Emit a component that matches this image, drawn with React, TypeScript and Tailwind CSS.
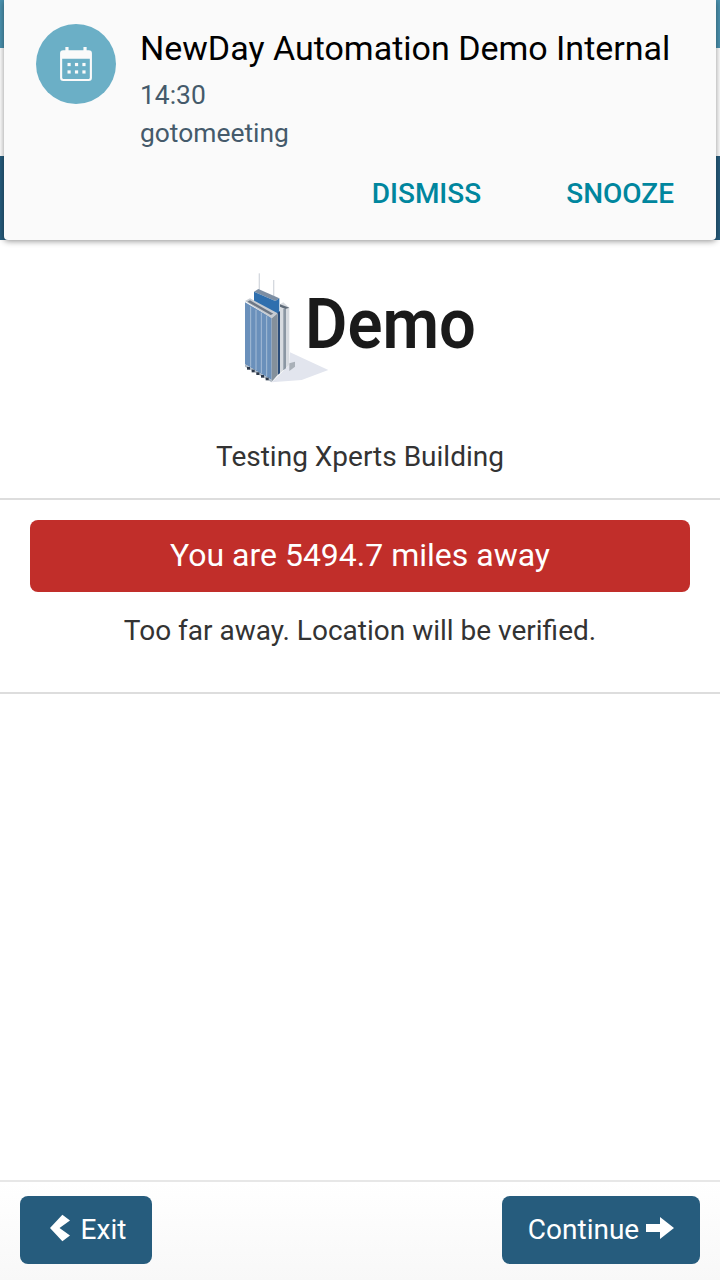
import React from "react";

function CalendarIcon() {
  return (
    <svg width="32" height="34" viewBox="1 1 30 32" fill="none">
      <path
        fillRule="evenodd"
        clipRule="evenodd"
        fill="#fafafa"
        d="M6 1h3v3h14V1h3v3h2a3 3 0 0 1 3 3v23a3 3 0 0 1-3 3H4a3 3 0 0 1-3-3V7a3 3 0 0 1 3-3h2V1zM3 12v18a1 1 0 0 0 1 1h24a1 1 0 0 0 1-1V12H3z"
      />
      <g fill="#fafafa">
        <rect x="8" y="16" width="3" height="3" />
        <rect x="15" y="16" width="3" height="3" />
        <rect x="22" y="16" width="3" height="3" />
        <rect x="8" y="23" width="3" height="3" />
        <rect x="15" y="23" width="3" height="3" />
        <rect x="22" y="23" width="3" height="3" />
      </g>
    </svg>
  );
}

// logo drawing, coordinates are 3x of the 100px wide box
function Building() {
  return (
    <svg width="100" height="125" viewBox="0 0 300 375" className="shrink-0 blur-[0.5px]">
      <polygon points="180,262 295,315 215,345 125,352 178,300" fill="#e2e5ee" />
      <rect x="86" y="25" width="4" height="52" fill="#d5d9df" />
      <rect x="129" y="45" width="4" height="50" fill="#d5d9df" />
      <polygon points="72,80 85,72 148,100 136,108" fill="#7d8ea3" />
      <polygon points="72,80 136,108 148,100 148,150 72,112" fill="#2f6fae" />
      <polygon points="150,118 160,112 178,128 178,300 150,325" fill="#d7dbe0" />
      <polygon points="150,118 178,128 166,132 150,125" fill="#5f6b78" />
      <polygon points="160,132 168,132 168,310 160,316" fill="#8b97a3" />
      <polygon points="143,143 150,138 150,325 143,330" fill="#2a4c78" />
      <polygon points="178,295 195,290 195,305 178,318" fill="#a9b0b8" />
      <polygon points="45,112 125,158 125,345 45,298" fill="#6a90bb" />
      <polygon points="45,108 60,100 143,145 125,160" fill="#c7ccd2" />
      <polygon points="52,110 60,106 130,146 122,150" fill="#6d7785" />
      <polygon points="125,160 143,145 143,330 125,350" fill="#84909b" />
      <g stroke="#a5bcd6" strokeWidth="3">
        <line x1="62" y1="125" x2="62" y2="305" />
        <line x1="78" y1="134" x2="78" y2="315" />
        <line x1="94" y1="143" x2="94" y2="325" />
        <line x1="110" y1="152" x2="110" y2="335" />
      </g>
      <polygon points="45,298 125,345 125,352 45,305" fill="#aab4bf" />
      <g fill="#2c384a">
        <rect x="51" y="306" width="9" height="8" />
        <rect x="65" y="314" width="9" height="8" />
        <rect x="79" y="322" width="9" height="8" />
        <rect x="93" y="330" width="9" height="8" />
        <rect x="107" y="338" width="9" height="8" />
      </g>
    </svg>
  );
}

export default function App() {
  return (
    <div className="relative flex h-[1280px] w-[720px] flex-col overflow-hidden bg-white font-['Roboto',sans-serif] text-[#333333]">
      <div className="h-12 bg-[#4b93b0]" />
      <div className="h-[108px] bg-white" />
      <div className="h-[84px] bg-[#265c7d]" />

      <div className="absolute left-1 right-1 top-0 h-60 rounded-b-[4px] bg-[#fafafa] shadow-[0_1px_6px_rgba(0,0,0,0.45)]">
        <div className="flex pl-8 pt-6">
          <div className="flex h-20 w-20 items-center justify-center rounded-full bg-[#6bafc6]">
            <CalendarIcon />
          </div>
          <div className="ml-[24px]">
            <div className="text-[34px] leading-[48px] text-black">NewDay Automation Demo Internal</div>
            <div className="mt-1 text-[26.4px] leading-[38px] text-[#455a6b]">14:30</div>
            <div className="text-[26.4px] leading-[38px] text-[#455a6b]">gotomeeting</div>
          </div>
        </div>
        <div className="mt-[26px] flex justify-end gap-[85px] pr-[42px] text-[28px] font-medium leading-[32px] text-[#00869e]">
          <span>DISMISS</span>
          <span>SNOOZE</span>
        </div>
      </div>

      <div className="flex h-[260px] flex-col border-b-2 border-[#dddddd]">
        <div className="mt-[25px] flex h-[125px] items-start pl-[230px]">
          <Building />
          <span className="-ml-[25px] mt-[24px] origin-left scale-x-[0.93] text-[70px] font-semibold leading-[70px] text-[#1a1a1a] blur-[0.5px]">
            Demo
          </span>
        </div>
        <div className="mt-[49px] text-center text-[28px] leading-[36px]">Testing Xperts Building</div>
      </div>

      <div className="h-[194px] border-b-2 border-[#dddddd] px-[30px] pt-5 text-center">
        <div className="flex h-[72px] items-center justify-center rounded-lg bg-[#c12e2a] pb-[2px] text-[32px] text-white">
          You are 5494.7 miles away
        </div>
        <div className="mt-[21px] text-[28px] leading-[36px]">Too far away. Location will be verified.</div>
      </div>

      <div className="flex-1" />

      <div className="flex h-[100px] items-start justify-between border-t-2 border-[#e7e7e7] bg-gradient-to-b from-white to-[#f8f8f8] px-5 pt-[14px]">
        <button className="flex h-[68px] w-[132px] items-center justify-center gap-[11px] rounded-lg bg-[#265c7d] pl-1 text-[28px] text-white">
          <svg width="20" height="28" viewBox="0 0 21 28" className="-mt-1">
            <polygon points="0,14 13,0 21,6 10,14 21,22 13,28" fill="#ffffff" />
          </svg>
          <span>Exit</span>
        </button>
        <button className="flex h-[68px] w-[198px] items-center justify-center gap-[7px] rounded-lg bg-[#265c7d] text-[28px] text-white">
          <span>Continue</span>
          <svg width="28" height="22" viewBox="0 0 28 22" className="-mt-1">
            <polygon points="0,7 14,7 14,0 28,11 14,22 14,15 0,15" fill="#ffffff" />
          </svg>
        </button>
      </div>
    </div>
  );
}
